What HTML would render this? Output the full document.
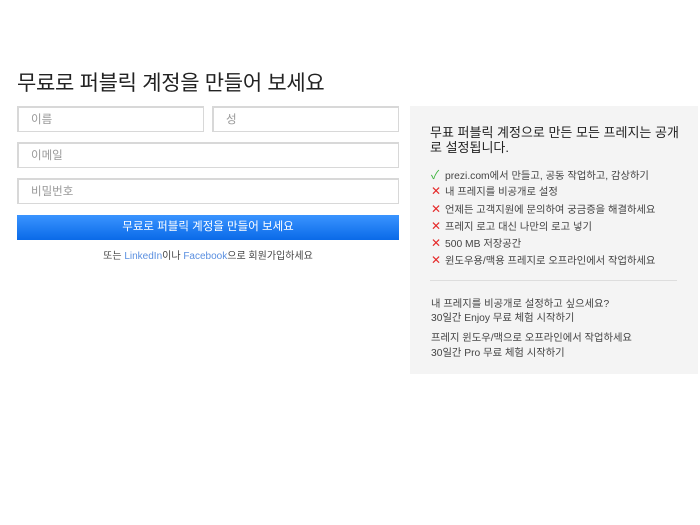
<!DOCTYPE html>
<html><head><meta charset="utf-8"><style>
*{margin:0;padding:0;box-sizing:border-box}
body{width:700px;height:525px;background:#fff;font-family:"Liberation Sans","Noto Sans CJK KR",sans-serif;color:#333;position:relative;overflow:hidden}
h1{position:absolute;left:17px;top:67px;font-size:21px;font-weight:normal;color:#222;letter-spacing:-0.3px;white-space:nowrap}
.in{position:absolute;height:26px;border:1px solid #d8d8d8;border-width:2px 1px 1px 2px;font-size:11.5px;color:#999;padding:3px 0 0 12px;background:#fff}
.btn{position:absolute;left:17px;top:215px;width:382px;height:25px;background:linear-gradient(#3a94ff,#0a6ae8);color:#fff;font-size:11.5px;text-align:center;line-height:24px}
.or{position:absolute;left:17px;width:382px;top:247px;text-align:center;font-size:10px;color:#444}
.or span,.lk{color:#5a8fe0}
.p{position:absolute;left:410px;top:106px;width:288px;height:268px;background:#f4f4f4}
.p h2{position:absolute;left:20px;top:19px;width:260px;font-size:13px;line-height:15px;font-weight:normal;color:#222}
.li{position:absolute;left:21px;font-size:10.3px;color:#444;white-space:nowrap}
.li b{display:inline-block;width:14px;font-weight:normal;font-size:12px}
.x{color:#e52a2a}.c{color:#3bb33b}
.hr{position:absolute;left:20px;top:174px;width:247px;height:1px;background:#ddd}
.t{position:absolute;left:21px;font-size:10.3px;color:#444;white-space:nowrap}
</style></head><body>
<h1>무료로 퍼블릭 계정을 만들어 보세요</h1>
<div class="in" style="left:17px;top:106px;width:187px">이름</div>
<div class="in" style="left:212px;top:106px;width:187px">성</div>
<div class="in" style="left:17px;top:142px;width:382px">이메일</div>
<div class="in" style="left:17px;top:178px;width:382px">비밀번호</div>
<div class="btn">무료로 퍼블릭 계정을 만들어 보세요</div>
<div class="or">또는 <span>LinkedIn</span>이나 <span>Facebook</span>으로 회원가입하세요</div>
<div class="p">
<h2>무표 퍼블릭 계정으로 만든 모든 프레지는 공개로 설정됩니다.</h2>
<div class="li" style="top:60px"><b class="c">✓</b>prezi.com에서 만들고, 공동 작업하고, 감상하기</div>
<div class="li" style="top:77px"><b class="x">✕</b>내 프레지를 비공개로 설정</div>
<div class="li" style="top:95px"><b class="x">✕</b>언제든 고객지원에 문의하여 궁금증을 해결하세요</div>
<div class="li" style="top:112px"><b class="x">✕</b>프레지 로고 대신 나만의 로고 넣기</div>
<div class="li" style="top:129px"><b class="x">✕</b>500 MB 저장공간</div>
<div class="li" style="top:146px"><b class="x">✕</b>윈도우용/맥용 프레지로 오프라인에서 작업하세요</div>
<div class="hr"></div>
<div class="t" style="top:189px">내 프레지를 비공개로 설정하고 싶으세요?</div>
<div class="t lk" style="top:203px">30일간 Enjoy 무료 체험 시작하기</div>
<div class="t" style="top:223px">프레지 윈도우/맥으로 오프라인에서 작업하세요</div>
<div class="t lk" style="top:238px">30일간 Pro 무료 체험 시작하기</div>
</div>
</body></html>
